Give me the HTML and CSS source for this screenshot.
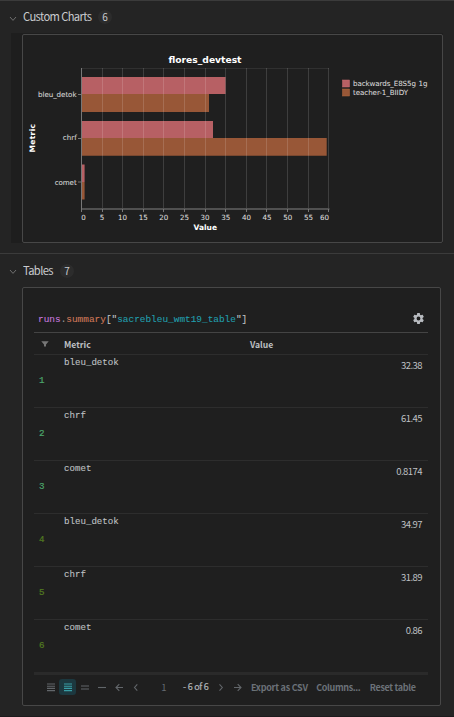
FILE: index.html
```html
<!DOCTYPE html>
<html lang="en">
<head>
<meta charset="utf-8">
<title>Workspace</title>
<link rel="stylesheet" href="styles.css">
</head>
<body>
<section class="section charts">
  <header class="section-head">
    <svg class="chevron" viewBox="0 0 8 6"><path d="M1 1l3 3.4L7 1"/></svg>
    <h2><svg class="label" width="70" height="18"><text x="0" y="13" textLength="69">Custom Charts</text></svg></h2><span class="count">6</span>
  </header>
  <div class="chart-bed">
    <div class="chart-card">
      <svg class="chart" width="419" height="207" viewBox="23 35 419 207">
        <text class="title" x="168.5" y="62.5" textLength="73">flores_devtest</text>
        <path class="bar-edge" d="M81 68.5H329"/>
        <g class="pink"><path d="M81 77h144.500v17H81zM81 121h132v17H81zM81 164.5h3.6v17.5H81z"/></g>
        <g class="orange"><path d="M81 94h128v18H81zM81 138h245.700v17.7H81zM81 182h3.6v17.5H81z"/></g>
        <path class="grid" d="M102.500 68V209M122.500 68V209M143.500 68V209M163.500 68V209M184.500 68V209M205.500 68V209M225.500 68V209M246.500 68V209M266.500 68V209M287.500 68V209M308.500 68V209M328.500 68V209"/>
        <path class="axis-bar" d="M81 209H329.500"/>
        <path class="axis" d="M81.500 68V212M78 94.500h3M78 138.500h3M78 182h3M102.500 209v3M122.500 209v3M143.500 209v3M163.500 209v3M184.500 209v3M205.500 209v3M225.500 209v3M246.500 209v3M266.500 209v3M287.500 209v3M308.500 209v3M328.500 209v3"/>
        <g class="tick">
          <text x="38" y="97" textLength="38.500">bleu_detok</text>
          <text x="62.700" y="140.300" textLength="14">chrf</text>
          <text x="54.700" y="184.600" textLength="22">comet</text>
        </g>
        <g class="tick num">
          <text x="83.500" y="219.600">0</text><text x="102" y="219.600">5</text><text x="122.500" y="219.600">10</text><text x="143.300" y="219.600">15</text><text x="163.700" y="219.600">20</text><text x="184.500" y="219.600">25</text><text x="205" y="219.600">30</text><text x="225.700" y="219.600">35</text><text x="246.500" y="219.600">40</text><text x="267" y="219.600">45</text><text x="287.700" y="219.600">50</text><text x="308.500" y="219.600">55</text><text x="324.500" y="219.600">60</text>
        </g>
        <text class="axis-title" x="193.500" y="229.600" textLength="23.500">Value</text>
        <text class="axis-title" transform="translate(34.500 152.500) rotate(-90)" textLength="28.500">Metric</text>
        <rect class="key-pink" x="342.500" y="80" width="7" height="7"/>
        <rect class="key-orange" x="342.500" y="89" width="7" height="7"/>
        <g class="tick">
          <text x="353" y="86" textLength="63">backwards_E8S5g</text>
          <text x="418.500" y="86" textLength="9">1g</text>
          <text x="353" y="95" textLength="55">teacher-1_BIIDY</text>
        </g>
      </svg>
    </div>
  </div>
</section>
<section class="section tables">
  <header class="section-head">
    <svg class="chevron" viewBox="0 0 8 6"><path d="M1 1l3 3.400L7 1"/></svg>
    <h2><svg class="label" width="32" height="18"><text x="0" y="13" textLength="30.500">Tables</text></svg></h2><span class="count">7</span>
  </header>
  <div class="table-card">
    <div class="query">
      <code><b class="q-runs">runs</b><span class="q-dot">.</span><b class="q-sum">summary</b>["<b class="q-key">sacrebleu_wmt19_table</b>"]</code>
      <svg class="gear" viewBox="0 0 24 24"><path d="M19.430 12.980a7.800 7.800 0 0 0 0-1.960l2.110-1.650a.5.5 0 0 0 .12-.64l-2-3.460a.5.5 0 0 0-.61-.22l-2.490 1a7.300 7.300 0 0 0-1.690-.98l-.38-2.650A.5.5 0 0 0 14 2h-4a.5.5 0 0 0-.49.420l-.38 2.650c-.61.250-1.170.590-1.690.980l-2.490-1a.5.5 0 0 0-.61.220l-2 3.460a.5.5 0 0 0 .12.640l2.110 1.650a7.800 7.800 0 0 0 0 1.960l-2.110 1.650a.5.5 0 0 0-.12.640l2 3.460c.12.220.39.300.61.220l2.490-1c.52.400 1.080.730 1.690.980l.38 2.650c.03.240.24.420.49.420h4c.25 0 .46-.18.49-.42l.38-2.650c.61-.25 1.170-.59 1.690-.98l2.490 1c.23.090.49 0 .61-.22l2-3.460a.5.5 0 0 0-.12-.64zM12 15.500a3.500 3.500 0 1 1 0-7 3.500 3.500 0 0 1 0 7z"/></svg>
    </div>
    <div class="row head"><span class="filter"><svg width="8" height="6" viewBox="0 0 8 6"><path d="M.3.300H7.700L5 3.500V5.500H3V3.500z"/></svg></span><span>Metric</span><span class="head-value">Value</span></div>
    <div class="row"><span class="index">1</span><span class="metric">bleu_detok</span><span class="value">32.38</span></div>
    <div class="row"><span class="index">2</span><span class="metric">chrf</span><span class="value">61.45</span></div>
    <div class="row"><span class="index">3</span><span class="metric">comet</span><span class="value">0.8174</span></div>
    <div class="row alt"><span class="index">4</span><span class="metric">bleu_detok</span><span class="value">34.97</span></div>
    <div class="row alt"><span class="index">5</span><span class="metric">chrf</span><span class="value">31.89</span></div>
    <div class="row alt"><span class="index">6</span><span class="metric">comet</span><span class="value">0.86</span></div>
    <footer class="pager">
      <span class="tool"><svg width="8" height="9" viewBox="0 0 8 9"><path d="M0 1h8M0 3.200h8M0 5.400h8M0 7.600h8"/></svg></span>
      <span class="tool on"><svg width="8" height="9" viewBox="0 0 8 9"><path d="M0 1h8M0 3.200h8M0 5.400h8M0 7.600h8"/></svg></span>
      <span class="tool dim"><svg width="8" height="9" viewBox="0 0 8 9"><path d="M0 3h8M0 6h8"/></svg></span>
      <span class="tool"><svg width="8" height="9" viewBox="0 0 8 9"><path d="M0 4.500h8"/></svg></span>
      <span class="tool"><svg width="8" height="9" viewBox="0 0 8 9"><path d="M8 4.500H1M4.300 1.200L1 4.500l3.300 3.300"/></svg></span>
      <span class="tool"><svg width="8" height="9" viewBox="0 0 8 9"><path d="M5.300 1.300L2.500 4.500l2.800 3.200"/></svg></span>
      <span class="page">1</span>
      <span class="range">- 6 of 6</span>
      <span class="tool next"><svg width="8" height="9" viewBox="0 0 8 9"><path d="M2.500 1.300L5.300 4.500 2.500 7.700"/></svg></span>
      <span class="tool"><svg width="8" height="9" viewBox="0 0 8 9"><path d="M0 4.500h7M3.700 1.200L7 4.500 3.700 7.800"/></svg></span>
      <svg class="actions" width="168" height="16"><text x="0" y="12" textLength="57">Export as CSV</text><text x="65.300" y="12" textLength="44.500">Columns...</text><text x="118.800" y="12" textLength="46.200">Reset table</text></svg>
    </footer>
  </div>
</section>
</body>
</html>
```
FILE: styles.css
```css
* { box-sizing: border-box; }
body {
  margin: 0;
  height: 717px;
  overflow: hidden;
  background: #242424;
  color: #bfc1c4;
  font-family: "Noto Sans CJK SC", sans-serif;
  font-size: 9.5px;
}
svg { display: block; flex: none; }
.section { border-top: 1.500px solid #3b3b3b; }
.charts { height: 253px; }
.tables { height: 464px; border-bottom: 1px solid #1c1a1c; }
.section-head { display: flex; align-items: center; height: 32px; padding-left: 9px; }
.tables .section-head { height: 33px; }
.chevron { width: 8px; height: 6px; margin: 3px 6px 0 0; fill: none; stroke: #707070; stroke-width: 1; }
h2 { margin: 0; font-weight: 400; }
.label text { font-size: 11.200px; fill: #c9cbce; }
.count {
  width: 14px; height: 14px; margin-left: 5px; border-radius: 7px;
  background: #2c2c2c; font-size: 10px; line-height: 14px; text-align: center; color: #c9cbce;
}
.chart-bed { width: 432px; height: 210px; margin-left: 11px; padding: 1px 0 0 11px; background: #1e1e1e; }
.chart-card { width: 421px; height: 209px; border: 1px solid #474747; border-radius: 2px; background: #1f1f1f; }
.chart text { font-family: "DejaVu Sans", sans-serif; fill: #e0e0e0; }
.chart .title { font-size: 9.200px; font-weight: 700; fill: #fff; }
.chart .axis-title { font-size: 7.500px; font-weight: 700; fill: #fff; }
.tick text { font-size: 7.100px; }
.num text { text-anchor: middle; }
.pink path, .key-pink { fill: #b76064; }
.orange path, .key-orange { fill: #985737; }
.key-pink { stroke: #cc6c70; stroke-width: .5; }
.key-orange { stroke: #b3683f; stroke-width: .5; }
.grid { fill: none; stroke: #fff; stroke-opacity: .14; }
.bar-edge { stroke: #303030; }
.axis { fill: none; stroke: #777; }
.axis-bar { stroke: #505050; stroke-width: 2; }
.table-card {
  width: 419px; height: 419px; margin-left: 22px; padding: 0 12px 0 11px;
  border: 1px solid #474747; border-radius: 2px; background: #1f1f1f;
}
.query { display: flex; justify-content: space-between; align-items: center; height: 44px; padding: 17px 3px 0 4px; }
code { font: 9.430px/14px "Liberation Mono", monospace; padding-top: 3px; -webkit-text-stroke: .1px; }
code b { font-weight: 400; }
.q-runs { color: #c678dd; }
.q-dot { color: #999; }
.q-sum { color: #cf7859; }
.q-key { color: #219eac; }
.gear { width: 13px; height: 13px; fill: #b8bbc0; }
.row { display: grid; grid-template-columns: 30px 186px 1fr; height: 53px; border-top: 1px solid #2d2d2d; }
.head { height: 22px; border-top: 1.500px solid #444; line-height: 23px; font-size: 8.600px; font-weight: 700; color: #bdbfc2; }
.filter { padding: 8px 0 0 6.500px; }
.filter path { fill: #777; }
.index { padding: 18px 0 0 5px; font: 9.200px/16px "Liberation Mono", monospace; color: #4ca66c; -webkit-text-stroke: .2px; }
.alt .index { color: #527b21; }
.metric { font: 9.150px/16px "Liberation Mono", monospace; -webkit-text-stroke: .1px; }
.value { padding: 2px 6px 0 0; line-height: 16px; text-align: right; font-size: 9.500px; letter-spacing: -.55px; }
.pager {
  display: flex; align-items: center; height: 27px; padding-left: 8px;
  border-top: 3px solid #2a2a2a; color: #656b72;
}
.tool { display: grid; place-items: center; width: 17px; height: 16px; border-radius: 3px; }
.tool svg { fill: none; stroke: #62666a; stroke-width: 1.100; }
.on { background: #1c383f; }
.on svg { stroke: #389da5; }
.dim svg { stroke: #4c4f52; stroke-width: 1.600; }
.page { width: 20px; text-align: center; line-height: 16px; margin-left: 10px; }
.range { width: 26px; margin-left: 9px; color: #b0b3b7; white-space: nowrap; line-height: 16px; font-size: 9px; letter-spacing: -.25px; -webkit-text-stroke: .2px; }
.next { margin-left: 3px; }
.actions { margin-left: 4.500px; }
.actions text { font-size: 9px; font-weight: 700; fill: #6b7178; }
```
